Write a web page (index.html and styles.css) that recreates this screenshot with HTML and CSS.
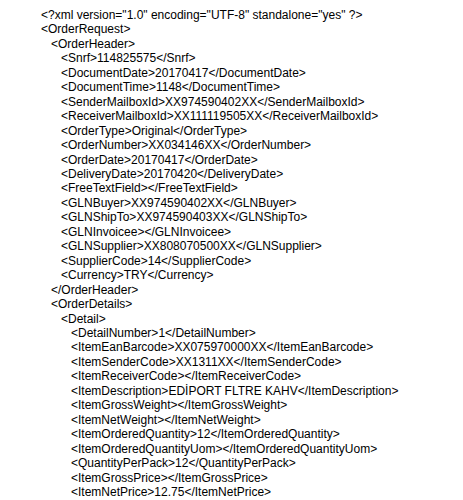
FILE: index.html
```html
<!DOCTYPE html>
<html>
<head>
<meta charset="utf-8">
<link rel="stylesheet" href="styles.css">
</head>
<body>
<div class="xml">
<div class="l0">&lt;?xml version="1.0" encoding="UTF-8" standalone="yes" ?&gt;</div>
<div class="l0">&lt;OrderRequest&gt;</div>
<div class="l1">&lt;OrderHeader&gt;</div>
<div class="l2">&lt;Snrf&gt;114825575&lt;/Snrf&gt;</div>
<div class="l2">&lt;DocumentDate&gt;20170417&lt;/DocumentDate&gt;</div>
<div class="l2">&lt;DocumentTime&gt;1148&lt;/DocumentTime&gt;</div>
<div class="l2">&lt;SenderMailboxId&gt;XX974590402XX&lt;/SenderMailboxId&gt;</div>
<div class="l2">&lt;ReceiverMailboxId&gt;XX111119505XX&lt;/ReceiverMailboxId&gt;</div>
<div class="l2">&lt;OrderType&gt;Original&lt;/OrderType&gt;</div>
<div class="l2">&lt;OrderNumber&gt;XX034146XX&lt;/OrderNumber&gt;</div>
<div class="l2">&lt;OrderDate&gt;20170417&lt;/OrderDate&gt;</div>
<div class="l2">&lt;DeliveryDate&gt;20170420&lt;/DeliveryDate&gt;</div>
<div class="l2">&lt;FreeTextField&gt;&lt;/FreeTextField&gt;</div>
<div class="l2">&lt;GLNBuyer&gt;XX974590402XX&lt;/GLNBuyer&gt;</div>
<div class="l2">&lt;GLNShipTo&gt;XX974590403XX&lt;/GLNShipTo&gt;</div>
<div class="l2">&lt;GLNInvoicee&gt;&lt;/GLNInvoicee&gt;</div>
<div class="l2">&lt;GLNSupplier&gt;XX808070500XX&lt;/GLNSupplier&gt;</div>
<div class="l2">&lt;SupplierCode&gt;14&lt;/SupplierCode&gt;</div>
<div class="l2">&lt;Currency&gt;TRY&lt;/Currency&gt;</div>
<div class="l1">&lt;/OrderHeader&gt;</div>
<div class="l1">&lt;OrderDetails&gt;</div>
<div class="l2">&lt;Detail&gt;</div>
<div class="l3">&lt;DetailNumber&gt;1&lt;/DetailNumber&gt;</div>
<div class="l3">&lt;ItemEanBarcode&gt;XX075970000XX&lt;/ItemEanBarcode&gt;</div>
<div class="l3">&lt;ItemSenderCode&gt;XX1311XX&lt;/ItemSenderCode&gt;</div>
<div class="l3">&lt;ItemReceiverCode&gt;&lt;/ItemReceiverCode&gt;</div>
<div class="l3">&lt;ItemDescription&gt;EDİPORT FLTRE KAHV&lt;/ItemDescription&gt;</div>
<div class="l3">&lt;ItemGrossWeight&gt;&lt;/ItemGrossWeight&gt;</div>
<div class="l3">&lt;ItemNetWeight&gt;&lt;/ItemNetWeight&gt;</div>
<div class="l3">&lt;ItemOrderedQuantity&gt;12&lt;/ItemOrderedQuantity&gt;</div>
<div class="l3">&lt;ItemOrderedQuantityUom&gt;&lt;/ItemOrderedQuantityUom&gt;</div>
<div class="l3">&lt;QuantityPerPack&gt;12&lt;/QuantityPerPack&gt;</div>
<div class="l3">&lt;ItemGrossPrice&gt;&lt;/ItemGrossPrice&gt;</div>
<div class="l3">&lt;ItemNetPrice&gt;12.75&lt;/ItemNetPrice&gt;</div>
</div>
</body>
</html>
```
FILE: styles.css
```css
html, body {
  margin: 0;
  padding: 0;
  background: #fff;
}
.xml {
  padding: 8px 0 0 41px;
  font-family: "Liberation Sans", Arial, sans-serif;
  font-size: 12px;
  line-height: 14.45px;
  color: #000;
  white-space: nowrap;
}
.l1 { padding-left: 10px; }
.l2 { padding-left: 20px; }
.l3 { padding-left: 30px; }
```
